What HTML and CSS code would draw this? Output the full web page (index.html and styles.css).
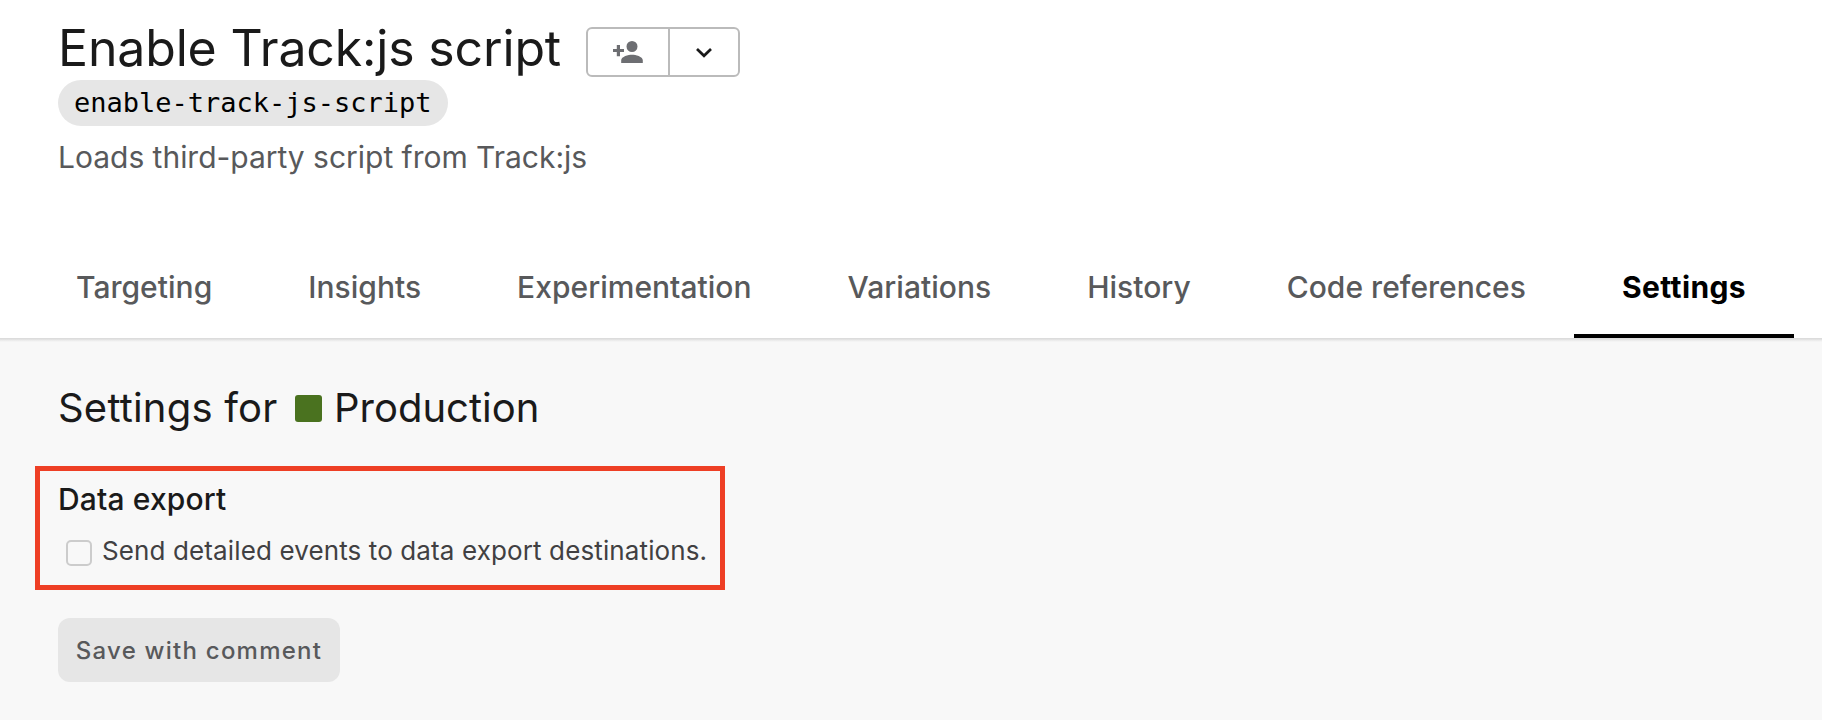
FILE: index.html
```html
<!DOCTYPE html>
<html lang="en">
<head>
<meta charset="utf-8">
<title>Enable Track:js script</title>
<link rel="stylesheet" href="styles.css">
</head>
<body>
<header class="header">
  <div class="title-row">
    <h1 class="title">Enable Track:js script</h1>
    <div class="button-group">
      <button class="group-button add" aria-label="Add member">
        <svg class="add-icon" viewBox="0 0 30 22"><path fill="#6d6e72" d="M3.8 4h3.2v4.1h4v3h-4v4.1H3.800v-4.100h-3.800v-3h3.800zM19 0a5.500 5.500 0 1 1 0 11a5.500 5.500 0 1 1 0-11zM8.200 22v-2.700c0-3.700 7.200-5.500 10.800-5.500s10.800 1.800 10.800 5.500V22z"/></svg>
      </button>
      <button class="group-button more" aria-label="More">
        <svg class="chevron" viewBox="0 0 16 10"><path fill="none" stroke="#1a1a1a" stroke-width="2.700" d="M1 1l7 6.800L15 1"/></svg>
      </button>
    </div>
  </div>
  <code class="key">enable-track-js-script</code>
  <p class="description">Loads third-party script from Track:js</p>
</header>
<nav class="tabs">
  <a class="tab">Targeting</a>
  <a class="tab">Insights</a>
  <a class="tab">Experimentation</a>
  <a class="tab">Variations</a>
  <a class="tab">History</a>
  <a class="tab">Code references</a>
  <a class="tab active">Settings</a>
</nav>
<main class="content">
  <h2 class="heading"><span class="heading-label">Settings for</span><span class="swatch"></span><span class="environment">Production</span></h2>
  <section class="export">
    <h3 class="export-title">Data export</h3>
    <label class="option"><span class="checkbox"></span><span class="option-text">Send detailed events to data export destinations.</span></label>
  </section>
  <button class="save"><span>Save with comment</span></button>
</main>
</body>
</html>
```
FILE: styles.css
```css
* { box-sizing: border-box; margin: 0; padding: 0; }
body {
  height: 720px;
  overflow: hidden;
  display: flex;
  flex-direction: column;
  background: #fff;
  color: #1a1a1a;
  font-family: Inter, "Liberation Sans", sans-serif;
}
button { border: 0; background: none; font: inherit; }
.header {
  height: 236px;
  padding: 18px 58px 0;
  display: flex;
  flex-direction: column;
  align-items: flex-start;
}
.title-row { display: flex; height: 62px; }
.title {
  width: 528px;
  font-size: 50px;
  font-weight: 400;
  line-height: 60px;
  letter-spacing: -0.16px;
  white-space: nowrap;
}
.button-group {
  display: flex;
  width: 154px;
  height: 50px;
  margin-top: 9px;
  border: 2px solid #bbb;
  border-radius: 6px;
}
.group-button { display: flex; align-items: center; justify-content: center; }
.add { width: 82px; border-right: 2px solid #bbb; }
.more { flex: 1; padding-top: 2px; padding-right: 1px; }
.add-icon { width: 30px; height: 22px; }
.chevron { width: 16px; height: 10px; }
.key {
  width: 390px;
  height: 46px;
  padding-left: 16px;
  border-radius: 23px;
  background: #e6e6e6;
  color: #000;
  font: 27px/45px "DejaVu Sans Mono", monospace;
  white-space: nowrap;
}
.description {
  margin-top: 13px;
  color: #58595b;
  font-size: 30px;
  line-height: 36px;
  letter-spacing: -0.02px;
}
.tabs { display: flex; height: 102px; padding-left: 28px; }
.tab {
  padding: 0 48px;
  color: #58595b;
  font-size: 30px;
  font-weight: 500;
  line-height: 102px;
  letter-spacing: 0.02px;
  white-space: nowrap;
}
.active {
  color: #000;
  font-weight: 700;
  letter-spacing: 0.38px;
  box-shadow: inset 0 -4px #000;
}
.content {
  flex: 1;
  padding: 45px 35px 0;
  background: linear-gradient(#dcdcdc, #dcdcdc 1px, #e9e9e9 2px, #f8f8f8 4px);
}
.heading {
  display: flex;
  align-items: center;
  height: 48px;
  padding-left: 23px;
  font-size: 40px;
  font-weight: 400;
}
.heading-label { width: 236.5px; letter-spacing: 0.2px; white-space: nowrap; }
.swatch { width: 27px; height: 27px; margin-top: 2px; border-radius: 3px; background: #4a721f; }
.environment { margin-left: 12.5px; }
.export {
  width: 690px;
  height: 124px;
  margin-top: 35px;
  padding: 10px 18px;
  border: 5px solid #ee3f25;
}
.export-title {
  font-size: 30px;
  font-weight: 500;
  line-height: 36px;
  letter-spacing: 0.15px;
}
.option { display: flex; margin-top: 17px; padding-left: 8px; }
.checkbox {
  flex: none;
  width: 26px;
  height: 26px;
  margin-top: 6px;
  border: 2px solid #ccc;
  border-radius: 5px;
}
.option-text {
  margin-top: 1px;
  margin-left: 10px;
  color: #414042;
  font-size: 26px;
  line-height: 32px;
  letter-spacing: 0.12px;
  white-space: nowrap;
}
.save {
  width: 282px;
  height: 64px;
  margin: 28px 0 0 23px;
  border-radius: 12px;
  background: #e6e6e6;
  color: #58595b;
  font-size: 24px;
  font-weight: 500;
  letter-spacing: 1.24px;
  white-space: nowrap;
}
```
